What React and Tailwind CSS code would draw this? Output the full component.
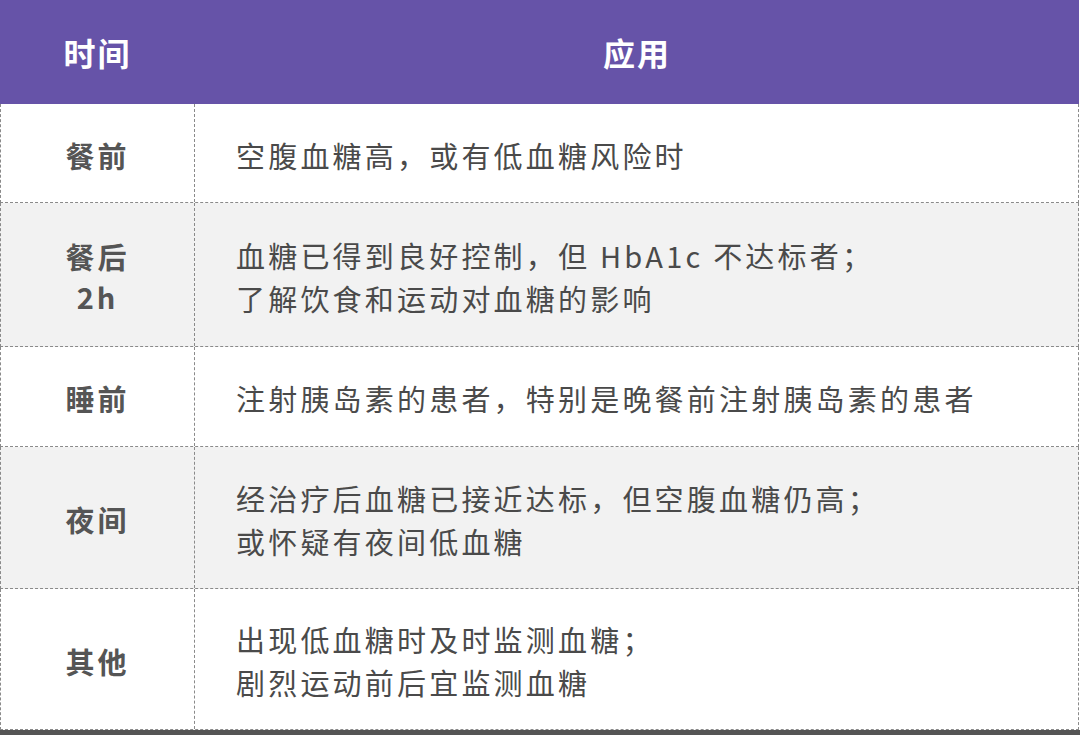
import React from 'react';

const rows = [
  { time: ['餐前'], use: ['空腹血糖高，或有低血糖风险时'], h: 'h-[99px]', bg: 'bg-white' },
  { time: ['餐后', '2h'], use: ['血糖已得到良好控制，但 HbA1c 不达标者；', '了解饮食和运动对血糖的影响'], h: 'h-[144px]', bg: 'bg-[#f2f2f2]' },
  { time: ['睡前'], use: ['注射胰岛素的患者，特别是晚餐前注射胰岛素的患者'], h: 'h-[100px]', bg: 'bg-white' },
  { time: ['夜间'], use: ['经治疗后血糖已接近达标，但空腹血糖仍高；', '或怀疑有夜间低血糖'], h: 'h-[142px]', bg: 'bg-[#f2f2f2]' },
  { time: ['其他'], use: ['出现低血糖时及时监测血糖；', '剧烈运动前后宜监测血糖'], h: 'h-[141px]', bg: 'bg-white' },
];

export default function App() {
  return (
    <div className="w-[1080px] h-[735px] bg-white overflow-hidden font-['Noto_Sans_CJK_SC','Noto_Sans',sans-serif]">
      <div className="w-[1079px]">
        {/* header */}
        <div className="flex h-[104px] bg-[#6653a8] text-white font-bold text-[32px] tracking-[2px]">
          <div className="w-[195px] flex items-center justify-center">时间</div>
          <div className="flex-1 flex items-center justify-center">应用</div>
        </div>

        {rows.map((r, i) => (
          <div
            key={i}
            className={`flex ${r.h} ${r.bg} border-l border-r border-b border-dashed border-[#8a8a8a]`}
          >
            <div className="w-[194px] border-r border-dashed border-[#8a8a8a] flex flex-col items-center justify-center text-[#555] font-bold text-[29px] leading-[40px] tracking-[3px] pt-[3px]">
              {r.time.map((t) => (
                <div key={t}>{t}</div>
              ))}
            </div>
            <div className="flex-1 pl-[41px] pt-[4px] flex flex-col justify-center text-[#4a4a4a] text-[29px] leading-[43px] tracking-[3.2px]">
              {r.use.map((t) => (
                <div key={t} className="whitespace-pre">{t}</div>
              ))}
            </div>
          </div>
        ))}
      </div>
      <div className="h-[5px] bg-[#555]" />
    </div>
  );
}
